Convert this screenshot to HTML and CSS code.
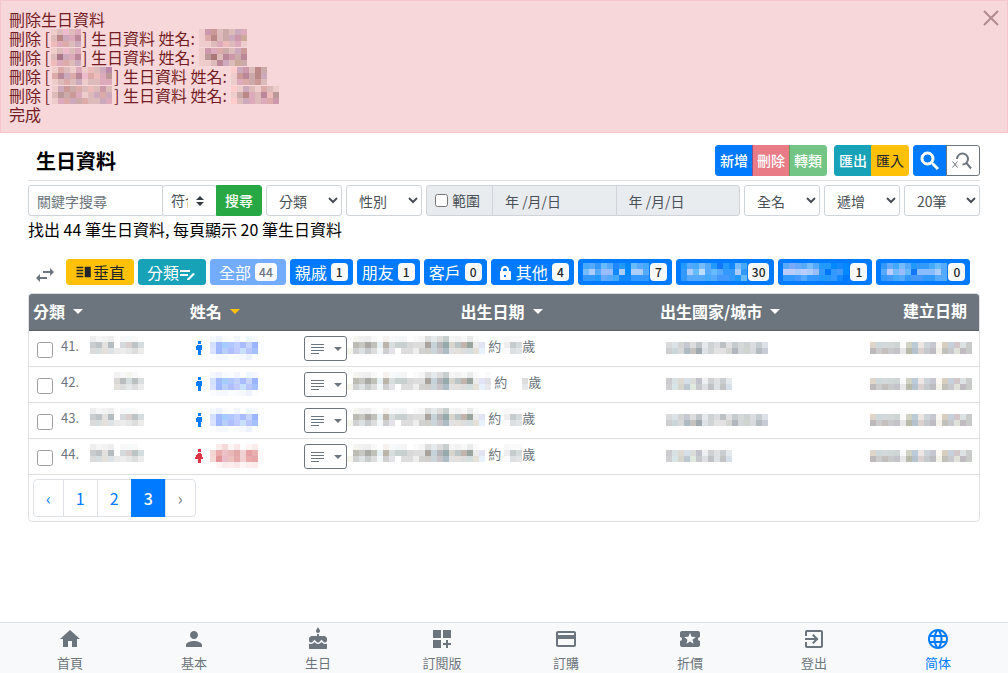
FILE: index.html
```html
<!DOCTYPE html>
<html lang="zh-Hant">
<head>
<meta charset="utf-8">
<meta name="viewport" content="width=device-width, initial-scale=1">
<title>生日資料</title>
<link rel="stylesheet" href="styles.css">
</head>
<body>
<div class="alert" role="alert">
  <div class="alert-text">
    <p>刪除生日資料</p>
    <p>刪除 [<span class="mosaic who" data-cells="ecc dbb ebc dbb dab/dbb b88 cab dab b89/ebb dab daa dbb cab"></span>] 生日資料 姓名: <span class="mosaic" data-cells="ecc c9a c99 dbb caa dbb cab dab/ecc daa b88 dbb caa cab c9a ca9/ecc ecc dbb dab ebb dbb dab ecc"></span></p>
    <p>刪除 [<span class="mosaic who" data-cells="ecc dbb ebc dbb dab/dbb a78 cab dab b89/ebb dab daa dbb cab"></span>] 生日資料 姓名: <span class="mosaic" data-cells="ecc c9a dab daa caa dbb cab c99/ecc b99 a77 dbb b89 c9a caa b89/ecc ecc dbb b89 cab dbb ca9 caa"></span></p>
    <p>刪除 [<span class="mosaic who long" data-cells="ecc daa dbb ecc dab ecc ebb dbb cab b8a/daa b89 cab daa b89 ebc daa ebb dab b99/ecc dbb daa dbb cab ecc dbb dbb dab dab"></span>] 生日資料 姓名: <span class="mosaic" data-cells="fcc cab c9a dbb b88 caa/ecc c99 b89 caa b88 cab/ecc dab daa caa c99 dbb"></span></p>
    <p>刪除 [<span class="mosaic who long" data-cells="ecc cab c99 caa daa dbb ebb dbb c9a dbb/dbb b99 caa c99 dab ecc dbb cab daa cab/ecc dab daa cab caa daa dbb dbb cab dab"></span>] 生日資料 姓名: <span class="mosaic" data-cells="fcc ecc cab dbb ecc daa dbb ecc/ecc caa b88 dab dbb b89 ebb b99/fcc dbb cab dab dbb dab daa c9a"></span></p>
    <p>完成</p>
  </div>
  <button class="close" type="button" aria-label="關閉"><svg width="16" height="16" viewBox="0 0 16 16"><path d="M1 1l14 14M15 1L1 15" stroke="currentColor" stroke-width="2" fill="none"/></svg></button>
</div>

<main class="page">
  <header class="title-bar">
    <h1>生日資料</h1>
    <div class="toolbar">
      <div class="group"><button class="btn blue" type="button">新增</button><button class="btn red faded" type="button">刪除</button><button class="btn green faded" type="button">轉類</button></div>
      <div class="group wide-gap"><button class="btn teal" type="button">匯出</button><button class="btn amber" type="button">匯入</button></div>
      <div class="group">
        <button class="btn blue icon-btn" type="button" aria-label="搜尋"><svg width="24" height="24" viewBox="0 0 24 24"><path fill="currentColor" stroke="currentColor" d="M15.500 14h-.79l-.28-.27C15.410 12.590 16 11.110 16 9.500 16 5.910 13.090 3 9.500 3S3 5.910 3 9.500 5.910 16 9.500 16c1.610 0 3.090-.59 4.230-1.570l.27.28v.79l5 4.990L20.490 19l-4.990-5zm-6 0C7.010 14 5 11.990 5 9.500S7.010 5 9.500 5 14 7.010 14 9.500 11.990 14 9.500 14z"/></svg></button>
        <button class="btn outline icon-btn" type="button" aria-label="清除搜尋"><svg width="24" height="24" viewBox="0 0 24 24" fill="none" stroke="currentColor"><path stroke-width="2" d="M6 10a5.500 5.500 0 1 1 5.500 5.500M15 13.500l5 6"/><path stroke-width="1" d="M1.500 12.500l5 6M6.500 12.500l-5 6"/></svg></button>
      </div>
    </div>
  </header>

  <form class="filters">
    <div class="group search">
      <input class="control keyword" type="text" placeholder="關鍵字搜尋" aria-label="關鍵字搜尋">
      <select class="control match" aria-label="比對方式"><option>符合</option></select>
      <button class="btn success" type="button">搜尋</button>
    </div>
    <select class="control pick" aria-label="分類"><option>分類</option></select>
    <select class="control pick" aria-label="性別"><option>性別</option></select>
    <div class="group range">
      <label class="control range-label"><input type="checkbox">範圍</label>
      <input class="control date" type="text" value="年 /月/日" aria-label="開始日期" disabled>
      <input class="control date" type="text" value="年 /月/日" aria-label="結束日期" disabled>
    </div>
    <select class="control pick" aria-label="名稱"><option>全名</option></select>
    <select class="control pick" aria-label="排序"><option>遞增</option></select>
    <select class="control pick" aria-label="每頁筆數"><option>20筆</option></select>
  </form>
  <p class="summary">找出 44 筆生日資料, 每頁顯示 20 筆生日資料</p>

  <div class="chips">
    <button class="swap" type="button" aria-label="切換"><svg width="24" height="24" viewBox="0 0 24 24"><path fill="currentColor" d="M6.990 11L3 15l3.990 4v-3H14v-2H6.990v-3zM21 9l-3.990-4v3H10v2h7.010v3L21 9z"/></svg></button>
    <button class="chip amber roomy" type="button"><svg width="18" height="18" viewBox="0 0 24 24"><path fill="currentColor" d="M2 15h9v-2H2v2zm0 4h9v-2H2v2zm0-8h9V9H2v2zm0-6v2h9V5H2zm11 0h8v14h-8V5z"/></svg>垂直</button>
    <button class="chip teal roomy" type="button">分類<svg width="18" height="18" viewBox="0 0 18 18"><path fill="currentColor" d="M1 7h10v2H1zM1 11h8v2H1zM8 16l6-6 2 1-6 6H8z"/></svg></button>
    <button class="chip blue roomy current" type="button">全部<b>44</b></button>
    <button class="chip blue" type="button">親戚<b>1</b></button>
    <button class="chip blue" type="button">朋友<b>1</b></button>
    <button class="chip blue" type="button">客戶<b>0</b></button>
    <button class="chip blue" type="button"><svg class="lock" width="18" height="18" viewBox="0 0 18 18"><path fill="currentColor" fill-rule="evenodd" d="M4 8h1V7a4 4 0 0 1 8 0v1h1q1 0 1 1v7q0 1-1 1H5q-1 0-1-1V8zm3 0h4V7a2 2 0 0 0-4 0zm1 4v2h2v-2z"/></svg>其他<b>4</b></button>
    <button class="chip blue" type="button" aria-label="類別"><span class="mosaic" data-cells="4af 5af 39f 6bf 5af 28f 29f 08f 6bf 5af 4af/7bf acf 5af 9bf 9bf 18f acf 08f acf acf 5af/39f 39f 29f 6af 5af 4af 18f 18f 39f 39f 39f"></span><b>7</b></button>
    <button class="chip blue" type="button" aria-label="類別"><span class="mosaic" data-cells="29f 5af 4af 7bf 5af 29f 17f 29f 18f 7bf 4af/39f acf 6bf bdf 5af 6bf 5af 39f 39f acf 39f/39f 5af 5af 5af 4af 5af 49f 49f 39f 29f 6bf"></span><b>30</b></button>
    <button class="chip blue" type="button" aria-label="類別"><span class="mosaic" data-cells="5af 7af 6af 5af 7bf 5af 29f 29f 08f 18f 08f/bcf bcf acf bcf acf 9bf 39f 07f 39f 49f 08f/39f 39f 49f 5af 39f 39f 29f 29f 39f 18f 07f"></span><b>1</b></button>
    <button class="chip blue" type="button" aria-label="類別"><span class="mosaic" data-cells="39f 6af 4af 7bf 5af 29f 39f 39f 4af 6bf 5af/5af bcf 7bf 9bf 6bf 17f 8bf 8bf 8bf acf 5af/39f 49f 4af 5af 39f 49f 49f 39f 39f 5af 5af"></span><b>0</b></button>
  </div>

  <section class="card">
    <table>
      <colgroup><col class="c-cat"><col class="c-name"><col class="c-birth"><col class="c-place"><col></colgroup>
      <thead><tr>
        <th><a class="sort" href="#">分類</a></th>
        <th><a class="sort active" href="#">姓名</a></th>
        <th class="center"><a class="sort" href="#">出生日期</a></th>
        <th><a class="sort" href="#">出生國家/城市</a></th>
        <th class="right">建立日期</th>
      </tr></thead>
      <tbody id="rows"></tbody>
    </table>
    <nav class="pager" aria-label="分頁">
      <a class="arrow" href="#">‹</a><a href="#">1</a><a href="#">2</a><a class="on" href="#" aria-current="page">3</a><a class="arrow muted" href="#">›</a>
    </nav>
  </section>
</main>

<nav class="bottom-nav" aria-label="主選單">
  <a href="#"><svg width="24" height="24" viewBox="0 0 24 24"><path d="M10 20v-6h4v6h5v-8h3L12 3 2 12h3v8z"/></svg>首頁</a>
  <a href="#"><svg width="24" height="24" viewBox="0 0 24 24"><path d="M12 12c2.210 0 4-1.790 4-4s-1.790-4-4-4-4 1.790-4 4 1.790 4 4 4zm0 2c-2.670 0-8 1.340-8 4v2h16v-2c0-2.660-5.330-4-8-4z"/></svg>基本</a>
  <a href="#"><svg width="24" height="24" viewBox="0 0 24 24"><path d="M12 6c1.110 0 2-.9 2-2 0-.38-.1-.73-.29-1.030L12 0l-1.710 2.970c-.19.3-.29.65-.29 1.030 0 1.100.9 2 2 2zm4.600 9.990l-1.070-1.070-1.080 1.070c-1.300 1.300-3.580 1.310-4.890 0l-1.070-1.070-1.090 1.070C6.750 16.640 5.880 17 4.960 17c-.73 0-1.400-.23-1.960-.61V21c0 .55.45 1 1 1h16c.55 0 1-.45 1-1v-4.610c-.56.38-1.230.61-1.960.61-.92 0-1.790-.36-2.440-1.010zM18 9h-5V7h-2v2H6c-1.660 0-3 1.340-3 3v1.540c0 1.080.88 1.960 1.960 1.960.52 0 1.020-.2 1.380-.57l2.140-2.130 2.130 2.130c.74.74 2.030.74 2.770 0l2.140-2.130 2.130 2.130c.37.37.86.57 1.380.57 1.080 0 1.960-.88 1.960-1.960V12C21 10.340 19.660 9 18 9z"/></svg>生日</a>
  <a href="#"><svg width="24" height="24" viewBox="0 0 24 24"><path d="M3 3h8v8H3zM13 3h8v8h-8zM3 13h8v8H3zM18 13h-2v3h-3v2h3v3h2v-3h3v-2h-3z"/></svg>訂閱版</a>
  <a href="#"><svg width="24" height="24" viewBox="0 0 24 24"><path d="M20 4H4c-1.110 0-1.990.89-1.990 2L2 18c0 1.110.89 2 2 2h16c1.110 0 2-.89 2-2V6c0-1.110-.89-2-2-2zm0 14H4v-6h16v6zm0-10H4V6h16v2z"/></svg>訂購</a>
  <a href="#"><svg width="24" height="24" viewBox="0 0 24 24"><path d="M20 12c0-1.100.9-2 2-2V6c0-1.100-.9-2-2-2H4c-1.100 0-1.990.9-1.990 2v4c1.100 0 1.990.9 1.990 2s-.89 2-2 2v4c0 1.100.9 2 2 2h16c1.100 0 2-.9 2-2v-4c-1.100 0-2-.9-2-2zm-4.420 4.800L12 14.500l-3.580 2.300 1.080-4.120-3.290-2.690 4.240-.25L12 5.800l1.540 3.950 4.240.25-3.290 2.690 1.090 4.110z"/></svg>折價</a>
  <a href="#"><svg width="24" height="24" viewBox="0 0 24 24"><path d="M10.090 15.590L11.500 17l5-5-5-5-1.410 1.410L12.670 11H3v2h9.670l-2.580 2.590zM19 3H5c-1.110 0-2 .9-2 2v4h2V5h14v14H5v-4H3v4c0 1.100.89 2 2 2h14c1.100 0 2-.9 2-2V5c0-1.100-.9-2-2-2z"/></svg>登出</a>
  <a class="on" href="#" lang="zh-Hans"><svg width="24" height="24" viewBox="0 0 24 24"><path d="M11.990 2C6.470 2 2 6.480 2 12s4.470 10 9.990 10C17.520 22 22 17.520 22 12S17.520 2 11.990 2zm6.930 6h-2.950c-.32-1.250-.78-2.450-1.380-3.560 1.840.63 3.370 1.910 4.330 3.560zM12 4.040c.83 1.200 1.480 2.530 1.910 3.960h-3.820c.43-1.430 1.080-2.760 1.910-3.960zM4.260 14C4.100 13.360 4 12.690 4 12s.1-1.360.26-2h3.380c-.08.66-.14 1.320-.14 2 0 .68.06 1.340.14 2H4.260zm.82 2h2.950c.32 1.250.78 2.450 1.380 3.560-1.840-.63-3.370-1.900-4.330-3.560zm2.950-8H5.080c.96-1.660 2.490-2.930 4.330-3.560C8.810 5.550 8.350 6.750 8.030 8zM12 19.960c-.83-1.200-1.480-2.530-1.910-3.960h3.820c-.43 1.430-1.080 2.760-1.910 3.960zM14.340 14H9.660c-.09-.66-.16-1.320-.16-2 0-.68.07-1.350.16-2h4.680c.09.65.16 1.320.16 2 0 .68-.07 1.340-.16 2zm.25 5.560c.6-1.110 1.060-2.310 1.380-3.560h2.950c-.96 1.650-2.490 2.930-4.330 3.560zM16.360 14c.08-.66.14-1.320.14-2 0-.68-.06-1.340-.14-2h3.380c.16.64.26 1.310.26 2s-.1 1.360-.26 2h-3.380z"/></svg>简体</a>
</nav>
<script src="app.js"></script>
</body>
</html>
```

FILE: styles.css
```css
* { box-sizing: border-box; }

body {
  margin: 0;
  min-height: 100vh;
  display: flex;
  flex-direction: column;
  background: #fff;
  color: #000;
  font-family: "Noto Sans CJK TC", "Noto Sans", sans-serif;
  font-size: 16px;
  line-height: 24px;
}

button, input, select { font: inherit; margin: 0; }
button { cursor: pointer; }
a { color: inherit; text-decoration: none; }
p { margin: 0; }
svg { display: block; flex: none; }

.mosaic { display: inline-block; vertical-align: top; flex: none; }

.alert {
  display: flex;
  justify-content: space-between;
  align-items: flex-start;
  padding: 9px 8px 8px;
  border: 1px solid #f5c6cb;
  background: #f8d7da;
  color: #721c24;
  line-height: 19px;
}
.alert .who { margin: 0 1px; }
.alert .who.long { margin: 0 2px; }
.close { padding: 0; border: 0; background: none; color: #b08a90; }

.page { flex: 1; padding: 12px 28px 0; }

.title-bar {
  display: flex;
  align-items: center;
  justify-content: space-between;
  padding-bottom: 4px;
  border-bottom: 1px solid #dee2e6;
}
h1 { margin: 0; padding-left: 8px; font-size: 20px; line-height: 24px; font-weight: 700; }

.toolbar { display: flex; gap: 4px; }
.wide-gap { margin-left: 3px; }
.group { display: flex; min-width: 0; }
.group > * + * { margin-left: -1px; }
.group > * { border-radius: 0; }
.group > :first-child { border-radius: 3px 0 0 3px; }
.group > :last-child { border-radius: 0 3px 3px 0; }

.btn {
  height: 31px;
  padding: 4px;
  border: 1px solid;
  font-size: 14px;
  line-height: 21px;
  font-weight: 500;
  white-space: nowrap;
}
.btn.amber { font-weight: 400; }
.chip {
  display: flex;
  align-items: center;
  height: 26px;
  padding: 0 4px;
  border: 1px solid;
  border-radius: 3px;
  line-height: 24px;
  white-space: nowrap;
}
.roomy { padding: 0 8px; }

.blue { background: #007bff; border-color: #007bff; color: #fff; }
.red { background: #dc3545; border-color: #dc3545; color: #fff; }
.green { background: #28a745; border-color: #28a745; color: #fff; }
.teal { background: #17a2b8; border-color: #17a2b8; color: #fff; }
.amber { background: #ffc107; border-color: #ffc107; color: #212529; }
.outline { background: #fff; border-color: #6c757d; color: #6c757d; }
.success { background: #28a745; border-color: #28a745; color: #fff; padding: 4px 8px; }
.faded { opacity: .65; }
.icon-btn { padding: 2px 4px; }
.chip.current { background: #73acff; border-color: #73acff; }

.filters { display: flex; gap: 4px; padding-top: 4px; }
.control {
  height: 31px;
  min-width: 0;
  padding: 4px 8px;
  border: 1px solid #ced4da;
  border-radius: 3px;
  background-color: #fff;
  color: #495057;
  font-size: 14px;
  line-height: 21px;
}
.control::placeholder { color: #6c757d; opacity: 1; }
.search { flex: 1 1 234px; }
.search .keyword { flex: 1; }
.search .match {
  width: 55px;
  padding-right: 28px;
  appearance: none;
  background: #fff url("data:image/svg+xml,%3csvg xmlns='http://www.w3.org/2000/svg' width='4' height='5' viewBox='0 0 4 5'%3e%3cpath fill='%23343a40' d='M2 0L0 2h4zm0 5L0 3h4z'/%3e%3c/svg%3e") no-repeat right 12px center / 8px 10px;
}
.pick { flex: 1 1 76px; }
.range { flex: 1 1 314px; }
.range .control { background: #e9ecef; border-color: #ced4da; border-radius: 0; }
.range .control:first-child { border-radius: 3px 0 0 3px; }
.range .control:last-child { border-radius: 0 3px 3px 0; }
.range-label { display: flex; align-items: center; gap: 4px; flex: none; width: 67px; white-space: nowrap; }
.range .control.date { flex: 1; padding-left: 12px; }

.summary { padding: 1px 0 3px; }

.chips { display: flex; gap: 4px; padding: 15px 0 8px 4px; }
.swap { width: 30px; height: 26px; padding: 4px 0 0; border: 0; background: none; color: #6c757d; }
.swap svg { margin-left: 1px; }
.chip b {
  min-width: 17px;
  margin-left: 4px;
  padding: 0 4px;
  border-radius: 4px;
  background: #f8f9fa;
  color: #212529;
  font-size: 12px;
  line-height: 18px;
  font-weight: 500;
  text-align: center;
}
.chip.current b { color: #6c757d; }
.chip .mosaic + b { margin-left: 1px; }
.lock { margin-right: 2px; }

.card { border: 1px solid #dfdfdf; border-radius: 4px; padding-bottom: 4px; }
table { width: 100%; border-collapse: separate; border-spacing: 0; table-layout: fixed; }
.c-cat { width: 16.5%; }
.c-name { width: 17%; }
.c-birth { width: 32.5%; }
.c-place { width: 17%; }
thead tr { height: 37px; }
th {
  padding: 0 4px 2px;
  background: #6c757d;
  border-bottom: 1px solid #5a6268;
  color: #fff;
  text-align: left;
  font-weight: 700;
}
th:first-child { border-radius: 3px 0 0 0; }
th:last-child { border-radius: 0 3px 0 0; }
.center { text-align: center; }
th.right { text-align: right; padding: 0 12px 5px 0; }
.sort { display: inline-flex; align-items: center; gap: 8px; }
.sort::after, .menu::after {
  content: "";
  border: 5px solid transparent;
  border-top-color: currentColor;
  border-bottom: 0;
}
.sort.active::after { border-top-color: #ffc107; }

td { height: 36px; padding: 0; border-bottom: 1px solid #dfdfdf; vertical-align: top; color: #6c757d; font-size: 13px; line-height: 20px; }
.cell { display: flex; align-items: flex-start; padding-top: 5px; }
.cell input { width: 16px; height: 16px; margin: 6px 8px 0; opacity: .7; }
.num { width: 29px; }
.person { margin: 5px 6px 0 8px; }
.menu {
  display: flex;
  align-items: center;
  justify-content: space-between;
  width: 43px;
  height: 25px;
  margin-left: auto;
  padding: 0 4px 0 6px;
  border: 1px solid #6c757d;
  border-radius: 3px;
  background: #fff;
  color: #6c757d;
}
.menu::after { border-width: 4px 4px 0; }
.birth { gap: 3px; }
.age { display: flex; }
.place { padding: 11px 0 0 10px; }
.made { padding: 11px 7px 0 0; justify-content: flex-end; }

.pager { display: flex; padding: 4px 4px 0; }
.pager a {
  height: 38px;
  padding: 6px 12px;
  border: 1px solid #dee2e6;
  color: #007bff;
  line-height: 25px;
}
.pager a + a { margin-left: -1px; }
.pager a:first-child { border-radius: 4px 0 0 4px; }
.pager a:last-child { border-radius: 0 4px 4px 0; }
.pager a.on { background: #007bff; border-color: #007bff; color: #fff; font-weight: 500; }
.pager a.muted { color: #6c757d; }

.bottom-nav {
  display: flex;
  padding: 4px 8px 0;
  border-top: 1px solid #dee2e6;
  background: #f8f9fa;
  color: #6c757d;
}
.bottom-nav a { flex: 1; display: flex; flex-direction: column; align-items: center; gap: 2px; font-size: 13px; line-height: 20px; }
.bottom-nav svg { fill: currentColor; }
.bottom-nav .on { color: #007bff; }
```

FILE: app.js
```js
const CELL = 6;

const category = 'eee f6f6f6 f2f2f2 eee fff f8f8f8 f5f9f9 f9f9f9 fff/c8ccce bcc2c6 e3e0e0 b5bcc0 fdfdfd d5d9dc d9cfcf bcc4c4 d5dce0/dadada d8dde0 e4e0dc dde2e6 e9e9e9 ededed e6e8e8 ddd ececec';
const categoryShort = 'fff fff fff fff f2f2f2 f8f8f8 f5f5f0 f9f9f9 fff/fff fff fff fff dad8d4 b9bcbd d5dcdc bcbfc0 d8dde0/fff fff fff fff e4e0dc ddd e4e8e8 ddd ececec';
const blueName = 'f5f8ff eef2ff f8faff fafcff f2f4ff fff eef6ff f5f8ff fff/d5dfff a0b9ff a4ccff b0c8ff c0d0ff a8bcff c5d5ff 9cb4ff fafcff/dae2ff 9fb8ff b8cffe aebeff c0ccff c8e0ff b8c5ff a4c0ff fafcff/fafcff f5f8ff f5f8ff fafcff f8faff f5f8ff eef2ff fafcff fff';
const redName = 'fff fbecec f5d8d8 fff5f5 f8e8e8 fff fff5f5 fbecec fff/f3d5d5 e8aaaa edc0c5 e8b8b8 e2a8a8 f0d0d0 e59fa5 e8b0b0 fffafa/f5d8d8 e29599 eabbc8 ecc0bd e5aaaa f0d0d0 e8aaaa e5a6aa fffafa/fff fff5f5 fbecec fceeee f9e8e8 fff5f5 fceeee fbecec fff';
const date = 'fff f5f5f0 f0f0f0 eee f8f8f8 fff f5f2f0 f8fafa f5f8f8 f5f5f5 fff fafafa f5f5f5 ddd e5eaec ddd c8cece f5f5f5 f2f2f2 f8f8f8 e8ebea fafafa fff/fff bcbcb4 c8c8c2 aaa9a5 c0c2ba e6f0f2 bcb4aa d8dede c8d0d0 c8d0cf d8d8d8 ddd ddd aaa29c c5d2d8 b5b5b7 95aaaa d8d5cf bcc5c5 c0b5ad 98a59f ececec e2e4f5/f5f5ee d0d2d1 dce2e4 c8cbcc ddd f2f8fa cfcfd1 e6e2e9 fff ddd ddd eee d2d2d0 d2cfca cbd4d8 c8c5ca aebdc5 e2e2e2 e4e0dc ddd d4dedf e5e0d8 e8f0fc';
const extra = ['fafafa', 'e0e0e4', 'e8e8ec'];
const dateLong = date.split('/').map((row, i) => `${row} ${extra[i]}`).join('/');
const age = 'f8f8f8 fafafa fafafa/eee c6cbce d5dadd/fafafa dde0e2 e2e5e8';
const ageShort = 'fff fff fff/fff fff ddd/fff fff e5e8ea';
const placeLong = 'd8dadb dde2e6 d2d5d4 c5c9d0 ddd c0c5c8 e5e9ec ced2d4 dadce0 bcc1c5 e0e0e3 c5cace d5d9da ccd3d2 dadce0 c5cdd0 dbe1e6/cdcfce ccd7da d8dada aeb9c0 c5c1be a0a9ad dde2e6 d0d4d4 e2e2e5 e2e2e5 d4d6d4 b1b7bc d2d7d9 d0d5cf d8dadd b4bcc1 c7cbd5';
const placeShort = 'cccbd0 d8e0e2 dcdad3 d5dfe8 dadcda bfc1c9 edf0f2 cdd1d3 dde1e4 caced0 e4e9ee/d0d0d2 d8e4e5 d5d5ce bcc7d0 e1e8df c7c7ce dde0e3 bfc3c7 dce1e4 c1c3c4 d7dfe8';
const made = 'e0d5ca cdd8da d5d8da d2d7d8 ced5d4 fafafa d0d2c5 bccbd8 eee5e5 cdd4d8 c6c7cf faf7f2 d8cec0 c6d1dc d1c7cb dce1e4 c9ccca/bdb8ba ccc c2bfbd c7c9cb c4c3c9 e7e7e8 b8baab b6c2ce dcd1d1 c6c9cc bcbcc2 f4f1ea c2c0bb c8c9cc e1e1dc bfbbc0 c8cac8';

const rows = [
  { no: 41, category, name: blueName, date, age, place: placeLong },
  { no: 42, category: categoryShort, name: blueName, date: dateLong, age: ageShort, place: placeShort },
  { no: 43, category, name: blueName, date, age, place: placeLong },
  { no: 44, category, name: redName, date, age, place: placeShort, female: true }
];

const man = '<path fill="#007bff" d="M4 0h3v3H4zM3 4h5v5H7v5H4V9H2V5h1z"/>';
const woman = '<path fill="#dc3545" d="M4 0h3v3H4zM4 4h3l2 5v1H7v4H4v-4H1V9z"/>';
const lines = '<path stroke="currentColor" d="M0 1.500h13M0 4.500h13M0 7.500h13M0 10.500h8"/>';
const mosaic = cells => `<span class="mosaic" data-cells="${cells}"></span>`;

document.getElementById('rows').innerHTML = rows.map(r => `<tr>
  <td><div class="cell"><input type="checkbox" aria-label="選取 ${r.no}"><span class="num">${r.no}.</span>${mosaic(r.category)}</div></td>
  <td><div class="cell"><svg class="person" width="10" height="14" viewBox="0 0 10 14" shape-rendering="crispEdges">${r.female ? woman : man}</svg>${mosaic(r.name)}<button class="menu" type="button" aria-label="選單 ${r.no}"><svg width="13" height="12" viewBox="0 0 13 12">${lines}</svg></button></div></td>
  <td><div class="cell birth">${mosaic(r.date)}<span>約</span><span class="age">${mosaic(r.age)}<span>歲</span></span></div></td>
  <td><div class="cell place">${mosaic(r.place)}</div></td>
  <td><div class="cell made">${mosaic(made)}</div></td>
</tr>`).join('');

document.querySelectorAll('.mosaic').forEach(el => {
  const grid = el.dataset.cells.split('/').map(row => row.trim().split(' '));
  const w = grid[0].length * CELL;
  const h = grid.length * CELL;
  const rects = grid.map((row, y) => row.map((c, x) =>
    `<rect x="${x * CELL}" y="${y * CELL}" width="${CELL}" height="${CELL}" fill="#${c}"/>`).join('')).join('');
  el.innerHTML = `<svg width="${w}" height="${h}" viewBox="0 0 ${w} ${h}" shape-rendering="crispEdges" aria-hidden="true">${rects}</svg>`;
});
```
